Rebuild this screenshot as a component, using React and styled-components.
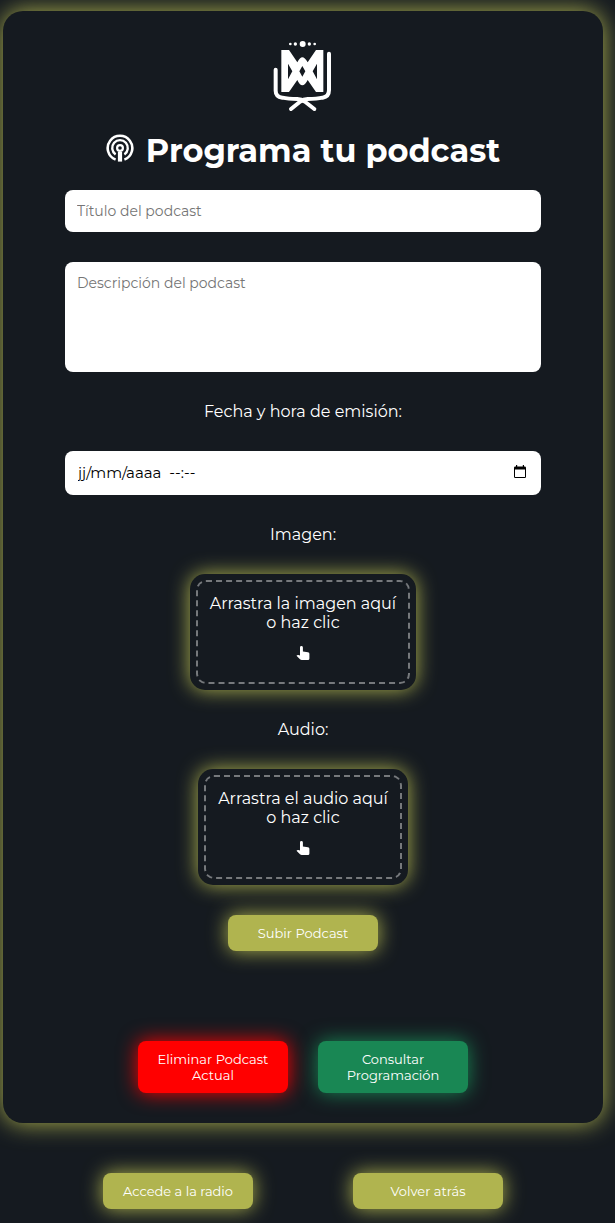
import React from "react";
import styled, { createGlobalStyle, css } from "styled-components";

const GlobalStyle = createGlobalStyle`
  * { box-sizing: border-box; }
  body {
    margin: 0;
    background: #151a20;
    color: #fff;
    font-family: Montserrat, Inter, sans-serif;
    font-size: 16px;
    line-height: 19px;
  }
`;

const olive = "#b0b44f";

const Page = styled.div`
  display: flex;
  flex-direction: column;
  align-items: center;
  gap: 50px;
  padding: 11px 12px 14px 3px;
  overflow: hidden;
`;

const Card = styled.main`
  display: flex;
  flex-direction: column;
  align-items: center;
  gap: 90px;
  width: 100%;
  max-width: 600px;
  padding: 29px 30px 30px;
  border-radius: 20px;
  box-shadow: 0 0 25px ${olive};
  background: #151a20;
`;

const Form = styled.form`
  display: flex;
  flex-direction: column;
  align-items: center;
  gap: 30px;
  width: 100%;
  padding: 0 32px;
`;

const Header = styled.header`
  display: flex;
  flex-direction: column;
  align-items: center;
  gap: 18px;
  margin-bottom: -12px;
`;

const Title = styled.h1`
  display: flex;
  align-items: center;
  gap: 12px;
  margin: 0;
  font-size: 32px;
  line-height: 42px;
  font-weight: 700;
  white-space: nowrap;
  svg { margin-bottom: 6px; }
`;

const field = css`
  width: 100%;
  border: 0;
  border-radius: 8px;
  padding: 12px;
  background: #fff;
  color: #000;
  font: 14px/18px Montserrat, Inter, sans-serif;
  &::placeholder { color: #757575; opacity: 1; }
`;

const TextField = styled.input`
  ${field}
  height: 42px;
`;

const TextArea = styled.textarea`
  ${field}
  display: block;
  height: 110px;
  resize: none;
`;

const DateBox = styled.div`
  ${field}
  display: flex;
  align-items: center;
  height: 44px;
  font-size: 15px;
`;

const DateInput = styled.input`
  flex: 1;
  min-width: 0;
  padding: 0 1px;
  border: 0;
  background: none;
  font: inherit;
  color: #000;
  &::placeholder { color: #000; opacity: 1; }
`;

const CalendarButton = styled.button`
  display: flex;
  padding: 0 3px 2px 0;
  border: 0;
  background: none;
  color: #000;
`;

const Label = styled.label`
  display: block;
`;

const DropZone = styled.label`
  display: flex;
  padding: 6px;
  border-radius: 15px;
  box-shadow: 0 0 20px ${olive};
  background: #151a20;
  text-align: center;
  cursor: pointer;
`;

const DropArea = styled.span`
  display: flex;
  flex-direction: column;
  align-items: center;
  gap: 13px;
  height: 104px;
  padding: 12px;
  border: 2px dashed #76797c;
  border-radius: 10px;
`;

const FileInput = styled.input`
  position: absolute;
  width: 1px;
  height: 1px;
  opacity: 0;
`;

const tones = { olive, red: "#ff0000", green: "#198754" };

const Button = styled.button`
  width: 150px;
  padding: 10px 12px;
  border: 0;
  border-radius: 8px;
  background: ${(p) => tones[p.$tone]};
  box-shadow: 0 0 20px ${(p) => tones[p.$tone]};
  color: #fff;
  font: 13px/16px Montserrat, Inter, sans-serif;
  cursor: pointer;
`;

const ButtonRow = styled.div`
  display: flex;
  justify-content: center;
  gap: ${(p) => p.$gap};
`;

const Logo = () => (
  <svg width="60" height="72" viewBox="39 30 180 216" role="img" aria-label="Logo">
    <g fill="#fff">
      <circle cx="91" cy="42" r="4" />
      <circle cx="106" cy="42" r="5" />
      <circle cx="128" cy="42" r="9" />
      <circle cx="148" cy="42" r="5" />
      <circle cx="164" cy="42" r="4" />
      <path
        fillRule="evenodd"
        d="M64 60H87L112 97Q120 82 127 82T143 97L168 60H190V186H168L143 150Q135 166 127 166T112 150L87 186H64ZM84 101V148L97 124ZM171 101V148L158 124ZM127 108L118 124L127 140L136 124Z"
      />
    </g>
    <g fill="none" stroke="#fff" strokeWidth="12" strokeLinecap="round">
      <path d="M47 119V182Q47 200 67 203Q84 207 112 207Q124 207 136 216L163 237" />
      <path d="M207 71V180Q207 200 188 203Q171 207 143 207Q131 207 119 216L93 237" />
    </g>
  </svg>
);

const PodcastIcon = () => (
  <svg width="28" height="28" viewBox="0 0 28 28" fill="none" stroke="#fff" aria-hidden="true">
    <path strokeWidth="2.6" d="M9.6 25.6A12.3 12.3 0 1 1 18.4 25.6" />
    <path strokeWidth="2.4" d="M9.6 20.4A7.8 7.8 0 1 1 18.4 20.4" />
    <circle cx="14" cy="14" r="2.9" strokeWidth="2.2" />
    <path fill="#fff" stroke="none" d="M11.9 18H16.1V27.6H11.9Z" />
  </svg>
);

const HandIcon = () => (
  <svg width="14" height="16" viewBox="0 0 14 16" fill="#fff" aria-hidden="true">
    <path d="M4 2.4Q4 1 5.4 1T6.9 2.4V6.6L12 7.2Q13.4 7.4 13.4 8.8V13.5Q13.4 15 12 15H5.7Q4.8 15 4 14.2L.5 10.8Q1.3 9.7 2.4 10L4 10.4Z" />
  </svg>
);

const CalendarIcon = () => (
  <svg width="12" height="14" viewBox="0 0 12 14" aria-hidden="true">
    <path
      fill="#000"
      fillRule="evenodd"
      d="M2 0H3.2V1.5H8.8V0H10V1.5H10.6Q12 1.5 12 2.8V11.7Q12 13 10.7 13H1.3Q0 13 0 11.7V2.8Q0 1.5 1.4 1.5H2ZM1 4.6V12H11V4.6Z"
    />
  </svg>
);

const FileDrop = ({ id, accept, children }) => (
  <DropZone htmlFor={id}>
    <DropArea>
      <span>
        {children}
        <br />o haz clic
      </span>
      <HandIcon />
    </DropArea>
    <FileInput id={id} type="file" accept={accept} />
  </DropZone>
);

export default function App() {
  return (
    <>
      <GlobalStyle />
      <Page>
        <Card>
          <Form onSubmit={(e) => e.preventDefault()}>
            <Header>
              <Logo />
              <Title>
                <PodcastIcon />
                Programa tu podcast
              </Title>
            </Header>
            <TextField type="text" aria-label="Título del podcast" placeholder="Título del podcast" />
            <TextArea aria-label="Descripción del podcast" placeholder="Descripción del podcast" />
            <Label htmlFor="fecha">Fecha y hora de emisión:</Label>
            <DateBox>
              <DateInput id="fecha" type="text" placeholder={"jj/mm/aaaa\u00a0 --:--"} />
              <CalendarButton type="button" aria-label="Abrir calendario">
                <CalendarIcon />
              </CalendarButton>
            </DateBox>
            <Label htmlFor="imagen">Imagen:</Label>
            <FileDrop id="imagen" accept="image/*">Arrastra la imagen aquí</FileDrop>
            <Label htmlFor="audio">Audio:</Label>
            <FileDrop id="audio" accept="audio/*">Arrastra el audio aquí</FileDrop>
            <Button type="submit" $tone="olive">Subir Podcast</Button>
          </Form>
          <ButtonRow $gap="30px">
            <Button type="button" $tone="red">Eliminar Podcast Actual</Button>
            <Button type="button" $tone="green">Consultar Programación</Button>
          </ButtonRow>
        </Card>
        <ButtonRow as="nav" $gap="100px">
          <Button type="button" $tone="olive">Accede a la radio</Button>
          <Button type="button" $tone="olive">Volver atrás</Button>
        </ButtonRow>
      </Page>
    </>
  );
}
